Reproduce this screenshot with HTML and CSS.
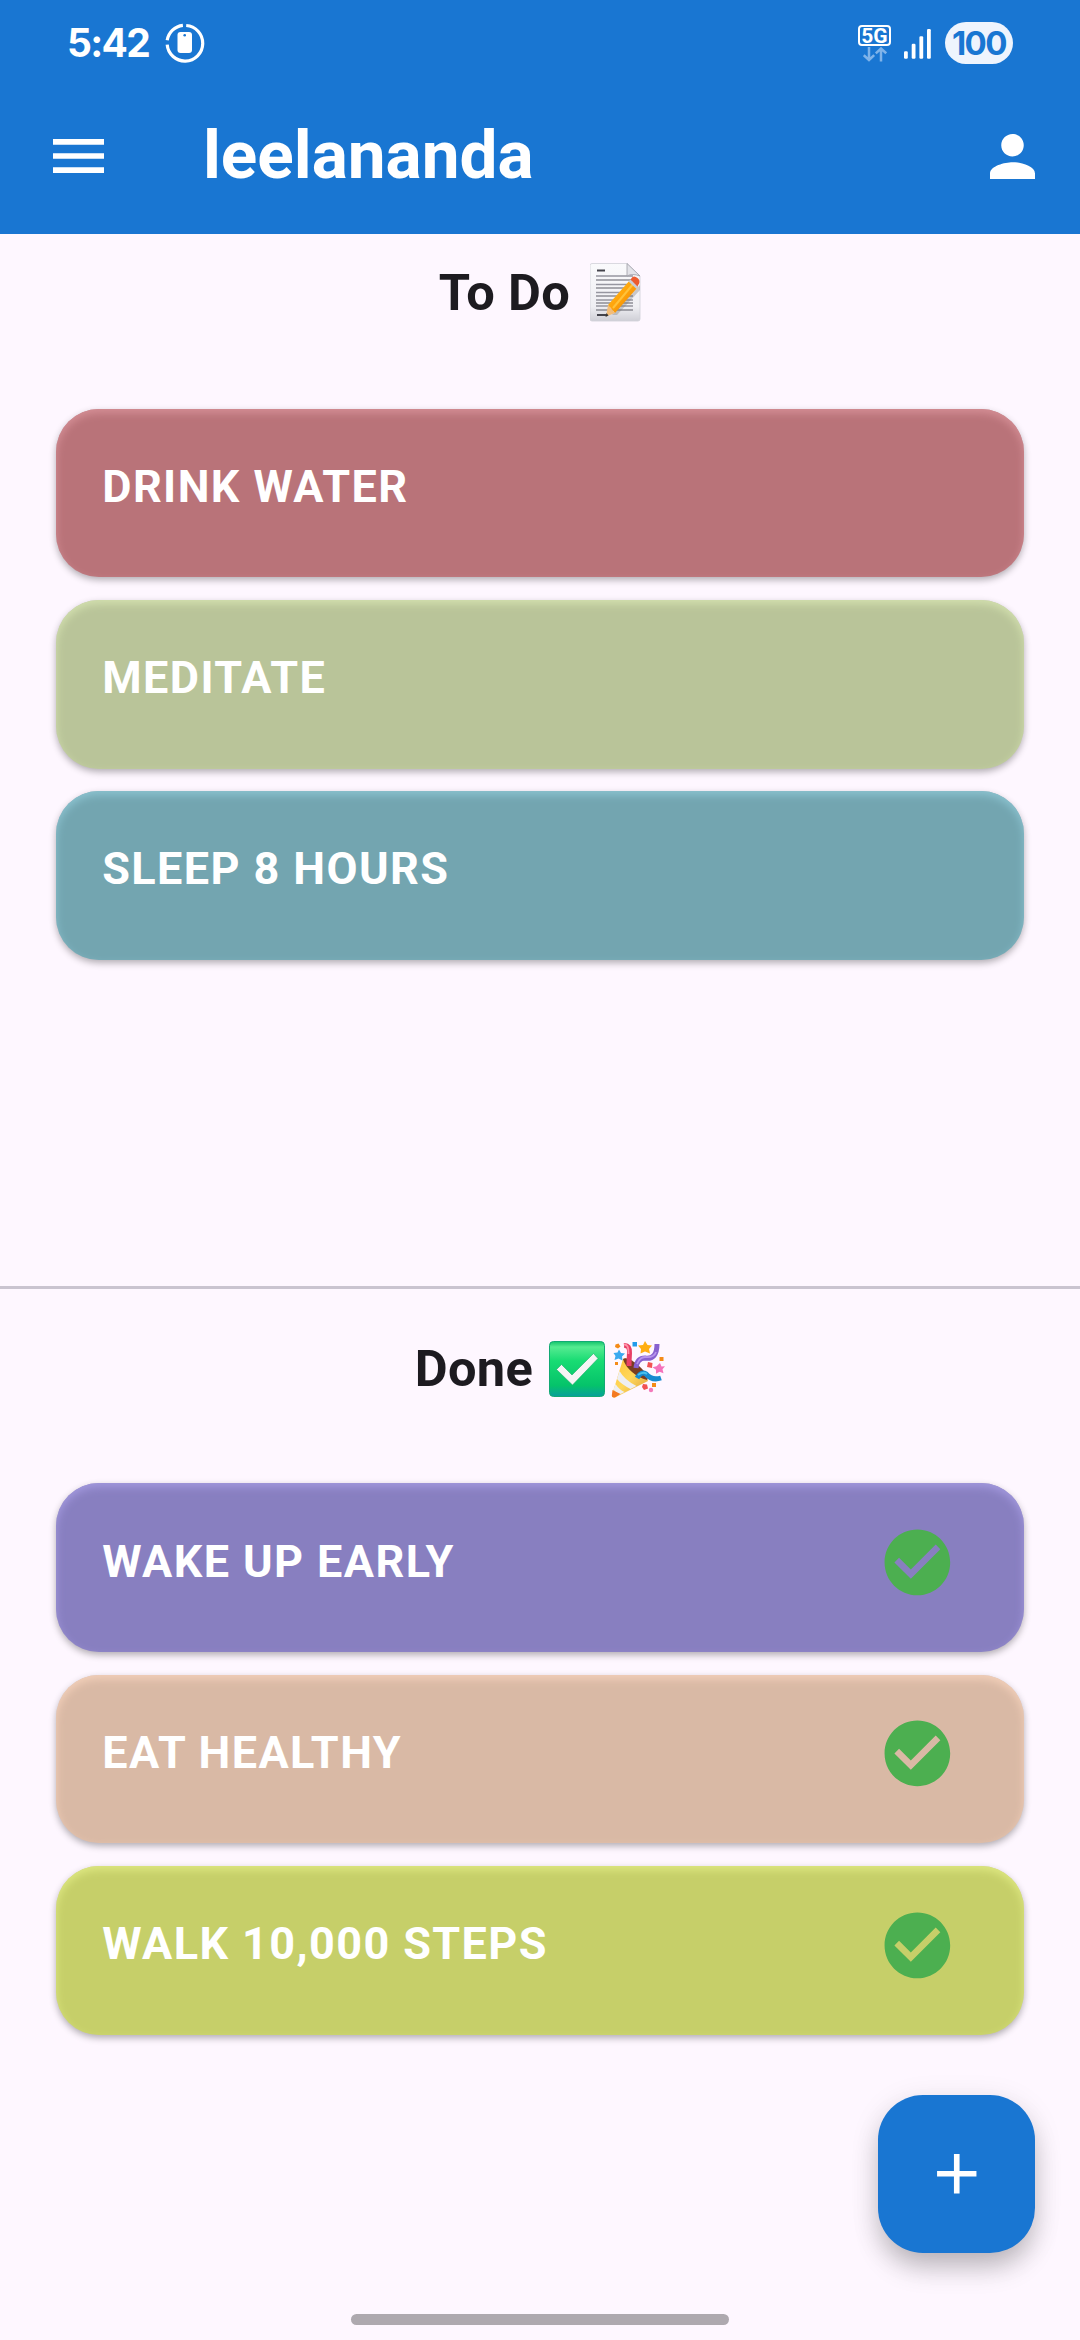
FILE: index.html
```html
<!DOCTYPE html>
<html lang="en">
<head>
<meta charset="utf-8">
<title>leelananda</title>
<link rel="stylesheet" href="styles.css">
</head>
<body>
<svg class="defs" width="0" height="0">
  <symbol id="done" viewBox="0 0 24 24"><path d="M12 2C6.48 2 2 6.48 2 12s4.48 10 10 10 10-4.480 10-10S17.520 2 12 2zm-2 15l-5-5 1.410-1.410L10 14.170l7.590-7.590L19 8l-9 9z" fill="#4CAF50"/></symbol>
</svg>
<div class="screen">
  <header class="header">
    <div class="status">
      <span class="clock">5:42</span>
      <svg class="care" viewBox="0 0 40 40" fill="none">
        <path d="M21.200 2.500A17.800 17.800 0 1 1 2.200 21.700M2.200 17.300A17.800 17.800 0 0 1 17.900 2.300" stroke="#fff" stroke-width="3.200"/>
        <rect x="12.500" y="9" width="14.500" height="21" rx="3" fill="#fff"/>
        <circle cx="19.700" cy="12.300" r="1.300" fill="#1976D2"/>
      </svg>
      <div class="network">
        <span class="fiveg">5G</span>
        <svg class="arrows" viewBox="0 0 24 15" fill="none" stroke="#7FB3E9" stroke-width="2.500"><path d="M6 0v13M.8 8.200L6 13l5.200-4.800M18 14.500V1.500M12.800 6.300L18 1.500l5.200 4.800"/></svg>
      </div>
      <svg class="signal" viewBox="0 0 27 30" fill="#fff"><rect x="0" y="22.300" width="3.800" height="7.400" rx="1.200"/><rect x="7.700" y="14.700" width="3.800" height="15" rx="1.200"/><rect x="15.400" y="7.200" width="3.800" height="22.500" rx="1.200"/><rect x="23" y="0" width="3.800" height="29.700" rx="1.200"/></svg>
      <span class="battery">100</span>
    </div>
    <div class="appbar">
      <svg class="menu" viewBox="3 6 18 12" preserveAspectRatio="none"><path d="M3 18h18v-2H3v2zm0-5h18v-2H3v2zm0-7v2h18V6H3z" fill="#fff"/></svg>
      <h1 class="title">leelananda</h1>
      <svg class="person" viewBox="4 4 16 16"><path d="M12 12c2.210 0 4-1.790 4-4s-1.790-4-4-4-4 1.790-4 4 1.790 4 4 4zm0 2c-2.670 0-8 1.340-8 4v2h16v-2c0-2.660-5.330-4-8-4z" fill="#fff"/></svg>
    </div>
  </header>

  <section class="todo">
    <h2 class="heading"><span>To Do</span>
      <svg class="memo" viewBox="0 0 51 60">
        <defs>
          <linearGradient id="paper" x2="0" y2="1"><stop stop-color="#fafafc"/><stop offset=".75" stop-color="#efeff3"/><stop offset="1" stop-color="#cfcfd6"/></linearGradient>
          <linearGradient id="pencil" x2="1" y2="1"><stop stop-color="#ffc21c"/><stop offset=".5" stop-color="#ffa20a"/><stop offset="1" stop-color="#d97706"/></linearGradient>
        </defs>
        <path d="M2 .5H37L50 13V56q0 2-2 2H2q-2 0-2-2V2.500Q0 .5 2 .5z" fill="url(#paper)" stroke="#d0d0d8" stroke-width=".8"/>
        <path d="M7 7.500h8M7 52h10" stroke="#44444c" stroke-width="2"/>
        <path d="M6 13H43M6 21.500H38M6 29.500H37M6 37H43M6 43H43" stroke="#9696a0" stroke-width="1.300"/>
        <path d="M6 17H42M6 25H36M6 33H43M6 40H43M6 47H43" stroke="#5c5c66" stroke-width="1.200"/>
        <path d="M37 .5L50 13Q42 10 37 13z" fill="#e3e3e8" stroke="#9c9ca5" stroke-width=".8"/>
        <path d="M22 52L50 22v5L27 52z" fill="#777" opacity=".35"/>
        <path d="M18 42L40 17l8 7L25 50z" fill="url(#pencil)"/>
        <path d="M23 45L44 20" stroke="#ffc23a" stroke-width="2"/>
        <path d="M38.500 18.500l2-2 8 7-2 2.500z" fill="#c9cdd4"/>
        <path d="M40.500 16.500l2-2.500q2-1.500 5 1t1.500 5.500l-1.500 3z" fill="#ed5b2e"/>
        <path d="M18 42l7 8-9 3.500z" fill="#f3bd79"/>
        <path d="M16.500 50l2 2.500-3 1.500z" fill="#333"/>
      </svg>
    </h2>
    <ul class="cards">
      <li class="card rose">DRINK WATER</li>
      <li class="card sage">MEDITATE</li>
      <li class="card teal">SLEEP 8 HOURS</li>
    </ul>
  </section>

  <section class="finished">
    <h2 class="heading"><span>Done</span>
      <svg class="tick" viewBox="0 0 56 56">
        <defs><linearGradient id="green" x2="0" y2="1"><stop stop-color="#13c46b"/><stop offset=".1" stop-color="#55eb91"/><stop offset=".35" stop-color="#18dc73"/><stop offset=".8" stop-color="#05c36a"/><stop offset="1" stop-color="#079f9c"/></linearGradient></defs>
        <rect x=".5" y=".5" width="55" height="55" rx="4" fill="url(#green)" stroke="#12a974"/>
        <path d="M7.500 28.500l5-5L23 34 44.500 12.500l4.500 5L23.500 44z" fill="#f5f5f5" stroke="#1eac69" stroke-width=".6"/>
      </svg>
      <svg class="party" viewBox="0 0 54 57">
        <defs><linearGradient id="cone" x2="1" y2="1"><stop stop-color="#ffc234"/><stop offset=".5" stop-color="#ffd75b"/><stop offset="1" stop-color="#d99c34"/></linearGradient></defs>
        <path d="M12 18q3-3 13 6t12 16L5 56q-4 2-4-2z" fill="url(#cone)"/>
        <path d="M12 18q2 7 9 13t15 8q3-4-8-14T12 18z" fill="#793d22"/>
        <path d="M8.500 30q5 9 17 15l-6 3Q10 43 6 38zM4.500 43q4 6 9 8l-5 2.500q-4-2-6-5z" fill="#eeeef3"/>
        <path d="M1.500 49l8 4L4 56.500Q0 57 1 53z" fill="#f47a22"/>
        <path d="M13 4.500Q19 4 18.500 12T18 25" fill="none" stroke="#e83f66" stroke-width="5"/>
        <path d="M13 3.500Q18 3 17.500 13" fill="none" stroke="#ff91a8" stroke-width="1.800"/>
        <path d="M25 27q1-10 9-10 12 2 12-14" fill="none" stroke="#8861cf" stroke-width="5"/>
        <path d="M26 23q3-7 8-7 9 1 11-5" fill="none" stroke="#b794ec" stroke-width="1.800"/>
        <path d="M26 37q4-7 9-4 6 7 15 4" fill="none" stroke="#188bd0" stroke-width="5"/>
        <path d="M27 34q5-4 9-1" fill="none" stroke="#48c1ef" stroke-width="1.800"/>
        <path d="M34 0l2.500 4 4.500.5-3 3.500 1 4.500-5-2-4.500 2 .5-4.500-3-3.500 5-.5z" fill="#ffae12"/>
        <path d="M8 8.500l2 3.500 4 .5-3 3 .5 4-4-2-4 1.500 1-4-2-3 4-.5z" fill="#3aa9ef"/>
        <path d="M49 22l1.500 3.500 3.500-.2-2.500 3 1 4-4-1.500-3.500 2v-4l-3.500-2.500 4-1z" fill="#f471bb"/>
        <path d="M21.500 1H26v4.500h-4.500z" fill="#219bea"/>
        <path d="M4.500 3.500L7.500 2.500 9.500 5.500 7 7.500 4 6zM4 21h3v3H4zM48.500 16h4v4h-4zM41 42h4v4h-4z" fill="#f48b18"/>
        <path d="M37 21l4.500 1-.5 5-5-1zM32 43l4 .5 1 4-4 1.500-2-3z" fill="#f15252"/>
        <circle cx="40" cy="49" r="2.200" fill="#f37abb"/>
      </svg>
    </h2>
    <ul class="cards">
      <li class="card violet">WAKE UP EARLY<svg class="check"><use href="#done"/></svg></li>
      <li class="card peach">EAT HEALTHY<svg class="check"><use href="#done"/></svg></li>
      <li class="card lime">WALK 10,000 STEPS<svg class="check"><use href="#done"/></svg></li>
    </ul>
  </section>

  <button class="fab" aria-label="Add"><svg viewBox="0 0 24 24"><path d="M19 13h-6v6h-2v-6H5v-2h6V5h2v6h6v2z" fill="#fff"/></svg></button>
  <div class="homebar"></div>
</div>
</body>
</html>
```
FILE: styles.css
```css
* { box-sizing: border-box; }
body { margin: 0; font-family: Roboto, sans-serif; background: #FEF7FF; }
svg { display: block; flex: none; }
.defs { position: absolute; }
.screen { position: relative; display: flex; flex-direction: column; width: 1080px; height: 2340px; overflow: hidden; background: #FEF7FF; color: #1D1B20; }

.header { height: 234px; background: #1976D2; color: #fff; flex: none; }
.status { display: flex; align-items: center; height: 86px; padding: 0 67px; }
.clock { width: 98px; font: 700 39px/86px Inter, sans-serif; letter-spacing: -1.700px; white-space: nowrap; }
.care { width: 40px; height: 40px; }
.network { display: flex; flex-direction: column; align-items: center; width: 33px; margin-left: auto; gap: 1px; padding-top: 1px; }
.fiveg { width: 33px; height: 21px; border: 2px solid #fff; border-radius: 4px; font: 700 21px/18px Roboto, sans-serif; text-align: center; }
.arrows { width: 24px; height: 15px; }
.signal { width: 27px; height: 30px; margin: 1px 14px 0 13px; }
.battery { width: 68px; height: 42px; border-radius: 21px; background: #EEF4FD; color: #1976D2; font: 700 33px/42px Inter, sans-serif; text-align: center; letter-spacing: -1.500px; }
.appbar { display: flex; align-items: center; height: 140px; padding: 0 45px 0 53px; }
.menu { width: 51px; height: 34px; }
.title { margin: 0 auto 0 99px; padding-bottom: 3px; font-size: 67.500px; line-height: 80px; font-weight: 700; }
.person { width: 45px; height: 45px; }

.todo { height: 1052px; padding-top: 24px; flex: none; }
.finished { border-top: 3px solid #CAC4D0; padding-top: 45px; flex: none; }
.heading { display: flex; align-items: center; justify-content: center; height: 70px; margin: 0; font-size: 50.600px; line-height: 70px; font-weight: 700; letter-spacing: .4px; }
.memo { width: 51px; height: 60px; margin-left: 20px; }
.tick { width: 56px; height: 56px; margin-left: 16px; }
.party { width: 54px; height: 57px; margin-left: 6px; }
.cards { display: grid; gap: 22.500px; margin: 0; padding: 80.500px 56.250px 0; list-style: none; }
.finished .cards { padding-top: 79.400px; }
.card { display: flex; align-items: center; justify-content: space-between; height: 168.750px; padding: 0 67px 13.500px 46px; border-radius: 43px; color: #fff; font-size: 45px; font-weight: 700; letter-spacing: 1.400px; background: var(--fill); box-shadow: inset 0 4px 8px var(--glow), 0 3px 7px rgba(0,0,0,.3); }
.check { width: 78.750px; height: 78.750px; margin-top: 3px; }
.rose { --fill: #B97379; --glow: #D58F96; }
.sage { --fill: #B9C499; --glow: #D3E0AF; }
.teal { --fill: #73A5B0; --glow: #8CC3D0; }
.violet { --fill: #887FC0; --glow: #A399DE; }
.peach { --fill: #D9B9A5; --glow: #F3D0BA; }
.lime { --fill: #C6CF69; --glow: #DEE882; }

.fab { position: absolute; right: 45px; bottom: 87.500px; display: grid; place-items: center; width: 157.500px; height: 157.500px; padding: 0; border: 0; border-radius: 45px; background: #1976D2; box-shadow: 0 17px 28px -4px rgba(0,0,0,.23), 0 6px 30px rgba(0,0,0,.1); }
.fab svg { width: 67.500px; height: 67.500px; }
.homebar { position: absolute; left: 351px; bottom: 15px; width: 378px; height: 11px; border-radius: 6px; background: #AEA9AF; }
```
